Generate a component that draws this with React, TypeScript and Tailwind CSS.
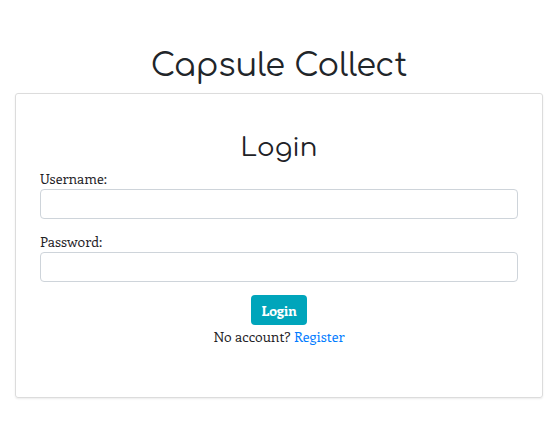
export default function App() {
  const head = { fontFamily: '"Comfortaa", Lato, "Noto Sans", sans-serif' };
  return (
    <div className="min-h-[427px] w-[558px] bg-white text-[#1e2226]" style={{ fontFamily: 'Enriqueta, "DejaVu Serif", serif' }}>
      <h1 className="pt-[44px] pb-[5px] text-center text-[32px] leading-[44px] text-[#212529]" style={head}>
        Capsule Collect
      </h1>
      <div className="mx-[15px] h-[305px] rounded-[3px] border border-[#dcdcdc] px-6 pt-[34px] shadow-[0_1px_2px_rgba(0,0,0,0.08)]">
        <h2 className="text-center text-[26px] leading-[40px]" style={head}>Login</h2>
        <form className="mt-[2px] flex flex-col">
          <label className="text-[14px] leading-[18px]">Username:</label>
          <input className="mt-[1px] h-[30px] rounded-[4px] border border-[#ced4da] bg-white" />
          <label className="mt-[14px] text-[14px] leading-[18px]">Password:</label>
          <input type="password" className="mt-[1px] h-[30px] rounded-[4px] border border-[#ced4da] bg-white" />
          <div className="mt-[13px] flex justify-center">
            <button type="button" className="h-[30px] rounded-[4px] bg-[#00a5bb] px-[10px] text-[14px] font-bold text-white">
              Login
            </button>
          </div>
          <p className="mt-[3px] text-center text-[14px] leading-[18px]">
            No account? <a className="text-[#007bff]">Register</a>
          </p>
        </form>
      </div>
    </div>
  );
}
